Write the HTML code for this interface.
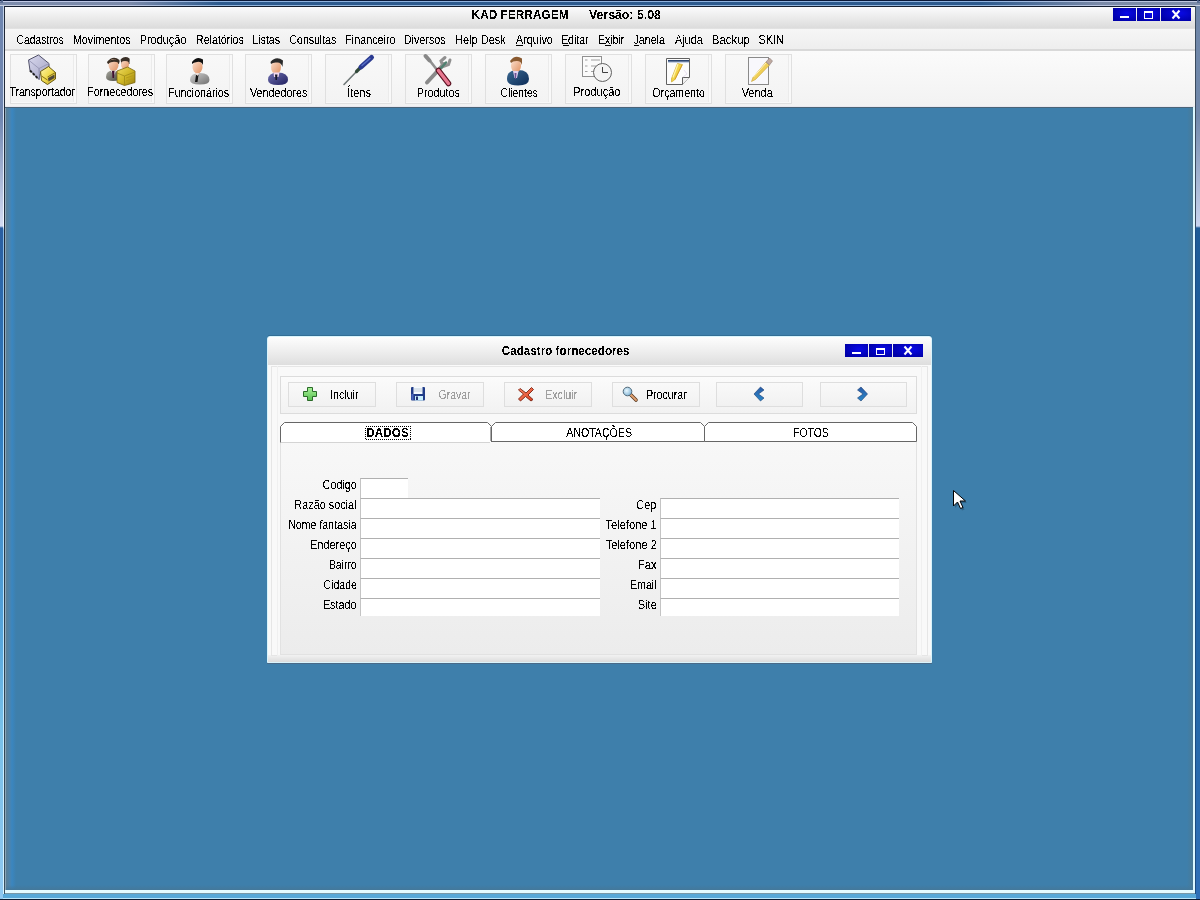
<!DOCTYPE html>
<html><head><meta charset="utf-8"><title>KAD FERRAGEM</title>
<style>
*{margin:0;padding:0;box-sizing:border-box}
html,body{width:1200px;height:900px;overflow:hidden;background:#2a5890;font-family:"Liberation Sans",sans-serif}
.a{position:absolute}
.tbb{position:absolute;top:54px;width:67px;height:50px;border:1px solid #e0e0e0;box-shadow:inset -2px -1px 0 #f9f9f9,inset -3px 0 0 #ebebeb;background:linear-gradient(#f8f8f8,#f3f3f3)}
.dbtn{position:absolute;top:382px;width:88px;height:25px;border:1px solid #dedede;background:linear-gradient(#f9f9f9,#f1f1f1)}
.fld{position:absolute;background:#fff;border-top:1px solid #b0b0b0;border-left:1px solid #c4c4c4}
</style></head><body>
<!-- ===== outer frame ===== -->
<div class="a" style="left:0;top:0;width:1200px;height:1px;background:#0a1838"></div>
<div class="a" style="left:0;top:1px;width:1200px;height:1px;background:linear-gradient(to right,#c4cce8 0,#b8c4e4 130px,#8fb2de 220px,#8fb2de 980px,#b8c4e0 1100px,#c0c8e0 1200px)"></div>
<div class="a" style="left:0;top:2px;width:1200px;height:3px;background:linear-gradient(to right,#7c8cac 0,#7a8aaa 130px,#2c5a8e 220px,#2c5a8e 980px,#7a8aa8 1100px,#7c8ca8 1200px)"></div>
<div class="a" style="left:0;top:5px;width:1200px;height:1px;background:linear-gradient(to right,#c8d0e0 0,#b8c4e0 130px,#90b4dc 220px,#90b4dc 980px,#b8c4e0 1100px,#c8d0e0 1200px)"></div>
<div class="a" style="left:3px;top:6px;width:1193px;height:1px;background:#141e30"></div>
<!-- left frame -->
<div class="a" style="left:0;top:6px;width:3px;height:893px;background:linear-gradient(#6f86b0 0,#6f86b0 110px,#d4dcf2 220px,#2a5ea0 222px,#2f7cc0 420px,#5aa8dc 640px,#78c0e8 720px,#90c8f0 894px)"></div>
<div class="a" style="left:3px;top:6px;width:1px;height:888px;background:linear-gradient(#c0d0e8 0,#f0f8ff 220px,#88b8e0 224px,#a8d8f8 420px,#c8ecff 720px,#d8f4ff 888px)"></div>
<div class="a" style="left:4px;top:6px;width:1px;height:888px;background:linear-gradient(#202838 0,#203040 400px,#385060 888px)"></div>
<!-- right frame -->
<div class="a" style="left:1196px;top:6px;width:4px;height:893px;background:linear-gradient(#6f86a8 0,#7088aa 110px,#c8d4ee 220px,#1e5c98 222px,#2060a0 420px,#2468a8 700px,#3070b8 894px)"></div>
<div class="a" style="left:1195px;top:6px;width:1px;height:888px;background:linear-gradient(#3a4a5c 0,#3a4a5c 220px,#1c4c80 224px,#1c4c80 888px)"></div>
<!-- bottom frame -->
<div class="a" style="left:3px;top:894px;width:1193px;height:4px;background:#58a8d8"></div>
<div class="a" style="left:3px;top:898px;width:1193px;height:1px;background:#b8e4fa"></div>
<div class="a" style="left:0;top:899px;width:1200px;height:1px;background:#0a1a30"></div>

<div class="a" style="left:0;top:0;width:3px;height:3px;background:#5a6e94;border-top-left-radius:3px"></div>
<div class="a" style="left:1197px;top:0;width:3px;height:3px;background:#5a6e94;border-top-right-radius:3px"></div>
<!-- ===== title bar ===== -->
<div class="a" style="left:5px;top:7px;width:1190px;height:22px;background:linear-gradient(#fafbfc 0,#eeeeee 40%,#dcdcdc 95%,#e6e6e6 100%)"></div>
<!-- window buttons -->
<div class="a" style="left:1113px;top:8px;width:23px;height:13px;background:radial-gradient(ellipse at 60% 40%,#0a0ae8,#0000a8 80%)"></div>
<div class="a" style="left:1137px;top:8px;width:23px;height:13px;background:radial-gradient(ellipse at 60% 40%,#0a0ae8,#0000a8 80%)"></div>
<div class="a" style="left:1161px;top:8px;width:30px;height:13px;background:radial-gradient(ellipse at 60% 40%,#0a0ae8,#0000a8 80%)"></div>
<div class="a" style="left:1120px;top:16px;width:9px;height:2px;background:#fff"></div>
<div class="a" style="left:1144px;top:11px;width:9px;height:8px;border:1px solid #fff;border-top-width:2px"></div>

<!-- ===== menubar ===== -->
<div class="a" style="left:5px;top:29px;width:1190px;height:20px;background:linear-gradient(#f6f6f6,#eeeeee)"></div>
<div class="a" style="left:5px;top:49px;width:1190px;height:2px;background:#d9d9d9"></div>
<!-- ===== toolbar ===== -->
<div class="a" style="left:5px;top:51px;width:1190px;height:56px;background:linear-gradient(#fbfbfb,#f2f2f2)"></div>
<div class="a" style="left:5px;top:106px;width:1190px;height:1px;background:#e8e8f0"></div>
<div class="tbb" style="left:10px"></div>
<div class="tbb" style="left:88px"></div>
<div class="tbb" style="left:166px"></div>
<div class="tbb" style="left:245px"></div>
<div class="tbb" style="left:325px"></div>
<div class="tbb" style="left:405px"></div>
<div class="tbb" style="left:485px"></div>
<div class="tbb" style="left:565px"></div>
<div class="tbb" style="left:645px"></div>
<div class="tbb" style="left:725px"></div>

<!-- ===== MDI client ===== -->
<div class="a" style="left:5px;top:107px;width:1188px;height:1px;background:#4a6478"></div>
<div class="a" style="left:5px;top:108px;width:1px;height:782px;background:#8aa6b8"></div>
<div class="a" style="left:6px;top:108px;width:1187px;height:782px;background:#3e7fab"></div>
<div class="a" style="left:6px;top:108px;width:10px;height:782px;background:linear-gradient(to right,#5a7e94 0,#4a84b0 4px,#3a86c0 6px,rgba(62,127,171,0) 10px)"></div>
<div class="a" style="left:1187px;top:108px;width:6px;height:782px;background:linear-gradient(to right,rgba(62,127,171,0),#4a7a96)"></div>
<div class="a" style="left:6px;top:885px;width:1187px;height:5px;background:linear-gradient(rgba(62,127,171,0),#44789a)"></div>
<div class="a" style="left:1193px;top:107px;width:2px;height:786px;background:#dcf8ff"></div>
<div class="a" style="left:5px;top:890px;width:1190px;height:3px;background:#e4faff"></div>
<div class="a" style="left:5px;top:893px;width:1190px;height:1px;background:#7898a8"></div>

<!-- ===== dialog ===== -->
<div class="a" style="left:267px;top:336px;width:665px;height:327px;background:#f9f9f9;border:1px solid #d8f4fc;border-radius:3px 3px 0 0"></div>
<div class="a" style="left:268px;top:337px;width:663px;height:28px;background:linear-gradient(#fdfdfd 0,#f0f0f0 45%,#dedede 100%);border-radius:2px 2px 0 0"></div>
<div class="a" style="left:268px;top:365px;width:663px;height:1px;background:#fafafa"></div>
<div class="a" style="left:268px;top:655px;width:663px;height:7px;background:linear-gradient(#f2f2f2,#dcdcdc)"></div>
<div class="a" style="left:267px;top:663px;width:665px;height:1px;background:#4a6a88"></div>
<div class="a" style="left:268px;top:335px;width:663px;height:1px;background:rgba(30,80,110,0.35);border-radius:2px"></div>
<!-- dialog buttons -->
<div class="a" style="left:845px;top:344px;width:23px;height:13px;background:radial-gradient(ellipse at 60% 40%,#0a0ae8,#0000a8 80%)"></div>
<div class="a" style="left:869px;top:344px;width:23px;height:13px;background:radial-gradient(ellipse at 60% 40%,#0a0ae8,#0000a8 80%)"></div>
<div class="a" style="left:893px;top:344px;width:30px;height:13px;background:radial-gradient(ellipse at 60% 40%,#0a0ae8,#0000a8 80%)"></div>
<div class="a" style="left:852px;top:352px;width:9px;height:2px;background:#fff"></div>
<div class="a" style="left:876px;top:348px;width:9px;height:7px;border:1px solid #fff;border-top-width:2px"></div>
<!-- inner panels -->
<div class="a" style="left:271px;top:366px;width:657px;height:290px;border:1px solid #e6e6e6"></div>
<div class="a" style="left:277px;top:366px;width:645px;height:290px;border:1px solid #f0f0f0;border-top:none"></div>
<!-- toolbar panel -->
<div class="a" style="left:280px;top:376px;width:637px;height:38px;border:1px solid #dcdcdc;background:linear-gradient(#fbfbfb,#f2f2f2)"></div>
<div class="dbtn" style="left:288px"></div>
<div class="dbtn" style="left:396px"></div>
<div class="dbtn" style="left:504px"></div>
<div class="dbtn" style="left:612px"></div>
<div class="dbtn" style="left:716px;width:87px"></div>
<div class="dbtn" style="left:820px;width:87px"></div>
<!-- page control -->
<div class="a" style="left:280px;top:441px;width:637px;height:214px;border-left:1px solid #e2e2e2;border-right:1px solid #e2e2e2;border-bottom:1px solid #e2e2e2;background:linear-gradient(#f8f8f8,#ececec)"></div>

<!-- fields -->
<div class="fld" style="left:360px;top:478px;width:48px;height:20px"></div>
<div class="fld" style="left:360px;top:498px;width:240px;height:20px"></div>
<div class="fld" style="left:360px;top:518px;width:240px;height:20px"></div>
<div class="fld" style="left:360px;top:538px;width:240px;height:20px"></div>
<div class="fld" style="left:360px;top:558px;width:240px;height:20px"></div>
<div class="fld" style="left:360px;top:578px;width:240px;height:20px"></div>
<div class="fld" style="left:360px;top:598px;width:240px;height:18px"></div>
<div class="fld" style="left:660px;top:498px;width:239px;height:20px"></div>
<div class="fld" style="left:660px;top:518px;width:239px;height:20px"></div>
<div class="fld" style="left:660px;top:538px;width:239px;height:20px"></div>
<div class="fld" style="left:660px;top:558px;width:239px;height:20px"></div>
<div class="fld" style="left:660px;top:578px;width:239px;height:20px"></div>
<div class="fld" style="left:660px;top:598px;width:239px;height:18px"></div>

<svg class="a" style="left:0;top:0;will-change:transform" width="1200" height="900" font-family="Liberation Sans, sans-serif">
<!-- tabs -->
<path d="M491.5 441.5 V426.5 L495.5 422.5 H700.5 L704.5 426.5 V441.5 Z" fill="#fff" stroke="#666"/>
<path d="M704.5 441.5 V426.5 L708.5 422.5 H912.5 L916.5 426.5 V441.5 Z" fill="#fff" stroke="#666"/>
<path d="M280.5 442.5 V426.5 L284.5 422.5 H487.5 L491.5 426.5 V442" fill="#fff" stroke="#666"/>
<line x1="490.5" y1="427" x2="490.5" y2="441" stroke="#aaa"/>
<line x1="281" y1="442.5" x2="490" y2="442.5" stroke="#d4d4d4"/>
<rect x="365.5" y="426.5" width="45" height="13" fill="none" stroke="#000" stroke-dasharray="1 1" shape-rendering="crispEdges"/>
<!-- close X main -->
<path d="M1172.5 10.5 L1179.5 18.5 M1179.5 10.5 L1172.5 18.5" stroke="#fff" stroke-width="2"/>
<path d="M904.5 346.5 L911.5 354.5 M911.5 346.5 L904.5 354.5" stroke="#fff" stroke-width="2"/>
<defs><filter id="alias" x="0" y="0" width="1200" height="900" filterUnits="userSpaceOnUse"><feComponentTransfer><feFuncA type="discrete" tableValues="0 0 0 0 0 0 0 0 0 1 1 1 1 1 1 1 1 1 1 1"/></feComponentTransfer></filter></defs>
<defs>
<linearGradient id="gBox" x1="0" y1="0" x2="1" y2="1"><stop offset="0" stop-color="#d8d8ee"/><stop offset="1" stop-color="#a4a4c4"/></linearGradient>
<linearGradient id="gYel" x1="0" y1="0" x2="1" y2="1"><stop offset="0" stop-color="#fff38a"/><stop offset="0.5" stop-color="#e8d020"/><stop offset="1" stop-color="#b09010"/></linearGradient>
<linearGradient id="gSkin" x1="0" y1="0" x2="1" y2="1"><stop offset="0" stop-color="#fbe0d0"/><stop offset="1" stop-color="#e09060"/></linearGradient>
<linearGradient id="gGrey" x1="0" y1="0" x2="1" y2="1"><stop offset="0" stop-color="#d0d0d0"/><stop offset="1" stop-color="#707070"/></linearGradient>
<linearGradient id="gNavy" x1="0" y1="0" x2="1" y2="1"><stop offset="0" stop-color="#7070b0"/><stop offset="1" stop-color="#202060"/></linearGradient>
<linearGradient id="gTeal" x1="0" y1="0" x2="1" y2="1"><stop offset="0" stop-color="#3a6890"/><stop offset="1" stop-color="#0c2c58"/></linearGradient>
<linearGradient id="gGreen" x1="0" y1="0" x2="0" y2="1"><stop offset="0" stop-color="#a8f098"/><stop offset="1" stop-color="#58c050"/></linearGradient>
<linearGradient id="gRed" x1="0" y1="0" x2="1" y2="1"><stop offset="0" stop-color="#ff9070"/><stop offset="1" stop-color="#d83818"/></linearGradient>
<linearGradient id="gChev" x1="0" y1="0" x2="0" y2="1"><stop offset="0" stop-color="#2a5ca8"/><stop offset="1" stop-color="#2a88c8"/></linearGradient>
<radialGradient id="gGlass" cx="0.4" cy="0.4" r="0.6"><stop offset="0" stop-color="#e8f8ff"/><stop offset="1" stop-color="#88b8d8"/></radialGradient>
<linearGradient id="gGold" x1="0" y1="0" x2="1" y2="1"><stop offset="0" stop-color="#f0dc60"/><stop offset="0.5" stop-color="#d0b828"/><stop offset="1" stop-color="#988010"/></linearGradient>
<linearGradient id="gDGrey" x1="0" y1="0" x2="1" y2="1"><stop offset="0" stop-color="#a8a8a0"/><stop offset="1" stop-color="#484840"/></linearGradient>
<linearGradient id="gCab" x1="0" y1="0" x2="1" y2="1"><stop offset="0" stop-color="#fff8b0"/><stop offset="0.5" stop-color="#f0dc50"/><stop offset="1" stop-color="#c0a020"/></linearGradient>
</defs>
<!-- 1 truck -->
<g stroke-linejoin="round">
<path d="M28.5 60 L38.5 55 L49 63.5 L49 70 L40 74 L39 79.5 L30 70.5 Z" fill="url(#gBox)" stroke="#505068" stroke-width="1"/>
<path d="M28.5 60 L39 68.5 L49 63.5" fill="none" stroke="#9090b0" stroke-width="0.8"/>
<path d="M39 68.5 L39.5 79.5" stroke="#8080a0" stroke-width="0.8"/>
<path d="M30 70.5 L38.5 79" stroke="#202020" stroke-width="2" stroke-dasharray="2.5 1.5"/>
<path d="M40.5 71.5 L48.5 66.5 L55.5 72.5 L55.5 79 L47.5 84.5 L41.5 80.5 Z" fill="url(#gCab)" stroke="#6a5a10" stroke-width="1"/>
<path d="M47.5 77 L55.5 72.5" stroke="#6a5a10" stroke-width="0.8"/>
<path d="M48 78 L54.5 74.5 L54.5 78 L48.5 81.5 Z" fill="#504838"/>
<path d="M41.5 76 L47.5 80" stroke="#8a7010" stroke-width="1"/>
</g>
<!-- 2 fornecedores -->
<g>
<path d="M121 59 Q125 55.5 129.5 58.5 L129.5 64 L121 64 Z" fill="#3a3028"/>
<ellipse cx="125" cy="64.5" rx="4" ry="5" fill="url(#gSkin)"/>
<path d="M120.5 59.5 Q125 57 129.5 59.5 L129 62 Q125 60 121 62 Z" fill="#3a3028"/>
<path d="M107 62 Q113 54.5 119.5 60 L119 64 L108 64 Z" fill="#3a2e24"/>
<ellipse cx="113.5" cy="65" rx="5" ry="6" fill="url(#gSkin)"/>
<path d="M107.5 62 Q113.5 57 119.5 61 L119 63 Q113.5 60.5 108 63.5 Z" fill="#3a2e24"/>
<path d="M106 77 Q106 70.5 113 70.5 Q120 70.5 120 77 Q120 81 113 81 Q106 81 106 77 Z" fill="url(#gDGrey)"/>
<path d="M111 71 L116 71 L113.5 76 Z" fill="#f4e8e8"/>
<path d="M112 71 L114.5 71 L114 78 L112.5 78 Z" fill="#401030"/>
<path d="M117 71 L127.5 67 L135 71 L135 82.5 L124.5 85.5 L117 82.5 Z" fill="url(#gGold)" stroke="#7a6410" stroke-width="0.8"/>
<path d="M117 73 L124.5 76 L135 72" fill="none" stroke="#a08a18" stroke-width="0.8"/>
<path d="M124.5 76 L124.5 85.5" stroke="#a08a18" stroke-width="0.8"/>
<path d="M126 78 L133.5 75.5 M126 81 L133.5 78.5" stroke="#b89c18" stroke-width="1"/>
</g>
<!-- 3 funcionarios -->
<g>
<path d="M190 80 Q190 73 200 73 Q209.5 73 209.5 80 Q209.5 84.5 200 84.5 Q190 84.5 190 80 Z" fill="url(#gGrey)"/>
<ellipse cx="197.5" cy="67" rx="5" ry="6.5" fill="url(#gSkin)"/>
<path d="M192 62 Q197 55.5 203 59.5 L203 65 Q201 61 197 62 Q193.5 62.5 192 64 Z" fill="#101010"/>
<path d="M196 75 L198.5 75 L197.5 82 L195 82 Z" fill="#141414"/>
<path d="M195 73 L199 73 L197.5 76 Z" fill="#f0e0d8"/>
</g>
<!-- 4 vendedores -->
<g>
<path d="M268 80 Q268 72.5 278 72.5 Q288 72.5 288 80 Q288 85 278 85 Q268 85 268 80 Z" fill="url(#gNavy)"/>
<ellipse cx="276" cy="67" rx="5" ry="7" fill="url(#gSkin)"/>
<path d="M270.5 62 Q276 55.5 283 60.5 L282.5 67 Q281 62 277 62.5 Q273 62 271 64 Z" fill="#2a2a2a"/>
<path d="M273.5 72.5 L279.5 72.5 L278.5 77 L274 77 Z" fill="#f0d8f0"/>
<path d="M275 74.5 L277.5 74.5 L277 80 L275.5 80 Z" fill="#181828"/>
</g>
<!-- 5 itens screwdriver -->
<g stroke-linecap="round">
<path d="M344 84.5 L358 70" stroke="#707878" stroke-width="1.6"/>
<path d="M356.5 71.5 L360.5 67.5" stroke="#304838" stroke-width="3.2"/>
<path d="M361 67 L371.5 57.5" stroke="#2a3a90" stroke-width="5"/>
<path d="M362 65.5 L370 58.5" stroke="#5870c8" stroke-width="1.4"/>
</g>
<!-- 6 produtos -->
<g stroke-linecap="round">
<path d="M427 57 L448 84" stroke="#909090" stroke-width="2.6"/>
<path d="M425.5 56 L429.5 60.5" stroke="#888" stroke-width="4"/>
<path d="M427 82.5 L444 64" stroke="#8a8a8a" stroke-width="4"/>
<path d="M445 57.5 L441 61 L443 66.5 L448.5 64.5 L450 60" fill="none" stroke="#909090" stroke-width="3"/>
<path d="M441 68 L446 62.5" stroke="#508070" stroke-width="2.5"/>
<path d="M438.5 70.5 L448.5 83.5" stroke="#5a1020" stroke-width="5.5"/>
<path d="M438.5 70.5 L448.5 83.5" stroke="#e87890" stroke-width="3.4"/>
</g>
<!-- 7 clientes -->
<g>
<path d="M507 79 Q507 70 518 70 Q529 70 529 79 Q529 85.5 518 85.5 Q507 85.5 507 79 Z" fill="url(#gTeal)"/>
<ellipse cx="516" cy="66" rx="5" ry="6.5" fill="url(#gSkin)"/>
<path d="M510 61 Q515 54 522 58.5 L522 65 Q520.5 60.5 516.5 61 Q512.5 61 511 63 Z" fill="#8a5a30"/>
<path d="M513 71 L518.5 71 L517 78 L514.5 78 Z" fill="#e0d0f0"/>
<path d="M514.5 73 L516.5 73 L516 79 L515 79 Z" fill="#6a5090"/>
</g>
<!-- 8 producao -->
<g>
<rect x="582.5" y="56.5" width="19" height="20" fill="#fbfbfb" stroke="#909090"/>
<path d="M585 60 L587.5 60 M591 60 L600 60 M585 66 L587.5 66 M591 66 L596 66 M585 71.5 L587.5 71.5 M591 71.5 L595 71.5" stroke="#a0a0a0" stroke-width="1.2"/>
<circle cx="602.5" cy="72.5" r="9" fill="#f4f4f4" stroke="#606060" stroke-width="1"/>
<path d="M602.5 72.5 V67 M602.5 72.5 H608" stroke="#404040" stroke-width="1"/>
</g>
<!-- 9 orcamento -->
<g>
<path d="M666.5 58.5 H689.5 V77 L682.5 84.5 H666.5 Z" fill="#fcfcfc" stroke="#606060" stroke-width="1"/>
<rect x="668" y="60" width="21" height="1.8" fill="#2a4470"/>
<rect x="668" y="61.8" width="21" height="1" fill="#b8c8e0"/>
<path d="M682.5 84.5 V77.5 H689.5" fill="#f0f0f0" stroke="#606060" stroke-width="1"/>
<path d="M677.5 63.5 L682.5 64.5 L674.5 80 L671.5 82 L671.5 78.5 Z" fill="#f2d448" stroke="#c8a020" stroke-width="0.6" stroke-linejoin="round"/>
<path d="M678 64 L673 77.5" stroke="#fff4b0" stroke-width="1.2"/>
<path d="M682 65 L675 79.5" stroke="#d09828" stroke-width="0.9"/>
<path d="M684 70 L687 74 L683 77" fill="none" stroke="#e8e0f0" stroke-width="1"/>
</g>
<!-- 10 venda -->
<g>
<rect x="748.5" y="57.5" width="20" height="27" fill="#f8f8fc" stroke="#8a8a8a" stroke-width="1"/>
<path d="M766 62 L769.5 65 L755.5 79.5 L751.5 81.5 L753 77.5 Z" fill="#efcf58" stroke="#c8a030" stroke-width="0.6" stroke-linejoin="round"/>
<path d="M766.5 62.5 L753.5 77" stroke="#fff4c0" stroke-width="1"/>
<path d="M766 62 L769.5 58 L772.5 61 L769.5 65 Z" fill="#c0aaa0" stroke="#8a7a78" stroke-width="0.6"/>
</g>
<!-- dialog icons -->
<path d="M307.5 387.5 H312.5 V391.5 H316.5 V396.5 H312.5 V400.5 H307.5 V396.5 H303.5 V391.5 H307.5 Z" fill="url(#gGreen)" stroke="#2a6a28" stroke-width="1"/>
<g>
<rect x="411" y="387" width="14" height="13.5" rx="1" fill="#203c88"/>
<rect x="413.5" y="387" width="9" height="7" fill="#f4faff"/>
<path d="M414 389 H422 M414 391 H422" stroke="#a0b0c0" stroke-width="0.6"/>
<rect x="415" y="396" width="8" height="4.5" fill="#c8f0ff"/>
<rect x="416" y="396.5" width="2" height="3.5" fill="#203070"/>
<rect x="411.5" y="394" width="2" height="6" fill="#4a68c0"/>
</g>
<path d="M520 388.5 L526 393 L531.5 387.5 L533.5 389.5 L528 395 L533 399.5 L531 401 L525.5 396.5 L520.5 401 L518.5 399 L523.5 394 L518.5 390 Z" fill="url(#gRed)" stroke="#7a2010" stroke-width="0.9" stroke-linejoin="round"/>
<g>
<path d="M630.5 394.5 L636 400" stroke="#5a3a20" stroke-width="3.6" stroke-linecap="round"/>
<path d="M630.5 394.5 L636 400" stroke="#e0a070" stroke-width="2" stroke-linecap="round"/>
<circle cx="627.5" cy="391.5" r="4.3" fill="url(#gGlass)" stroke="#506878" stroke-width="1"/>
</g>
<path d="M760.5 387 L764 390 L758.5 394 L764 398 L760.5 401 L754 394 Z" fill="url(#gChev)" stroke="#1a3a70" stroke-width="0.6" stroke-linejoin="round"/>
<path d="M861 387 L857.5 390 L863 394 L857.5 398 L861 401 L867.5 394 Z" fill="url(#gChev)" stroke="#1a3a70" stroke-width="0.6" stroke-linejoin="round"/>

<!-- underlines -->
<rect x="516" y="45" width="7" height="1" fill="#000"/>
<rect x="563" y="45" width="6" height="1" fill="#000"/>
<rect x="605" y="45" width="6" height="1" fill="#000"/>
<rect x="634" y="45" width="5" height="1" fill="#000"/>
<g filter="url(#alias)">
<text x="471.59" y="19" font-size="12.5" font-weight="bold" fill="#000" textLength="97.00" lengthAdjust="spacingAndGlyphs">KAD FERRAGEM</text>
<text x="588.95" y="19" font-size="12.5" font-weight="bold" fill="#000" textLength="71.96" lengthAdjust="spacingAndGlyphs">Versão: 5.08</text>
<text x="16.42" y="44" font-size="12" font-weight="normal" fill="#000" textLength="47.21" lengthAdjust="spacingAndGlyphs">Cadastros</text>
<text x="72.96" y="44" font-size="12" font-weight="normal" fill="#000" textLength="57.68" lengthAdjust="spacingAndGlyphs">Movimentos</text>
<text x="139.64" y="44" font-size="12" font-weight="normal" fill="#000" textLength="46.85" lengthAdjust="spacingAndGlyphs">Produção</text>
<text x="195.97" y="44" font-size="12" font-weight="normal" fill="#000" textLength="47.75" lengthAdjust="spacingAndGlyphs">Relatórios</text>
<text x="252.31" y="44" font-size="12" font-weight="normal" fill="#000" textLength="27.79" lengthAdjust="spacingAndGlyphs">Listas</text>
<text x="289.56" y="44" font-size="12" font-weight="normal" fill="#000" textLength="46.65" lengthAdjust="spacingAndGlyphs">Consultas</text>
<text x="345.15" y="44" font-size="12" font-weight="normal" fill="#000" textLength="50.37" lengthAdjust="spacingAndGlyphs">Financeiro</text>
<text x="403.80" y="44" font-size="12" font-weight="normal" fill="#000" textLength="41.88" lengthAdjust="spacingAndGlyphs">Diversos</text>
<text x="455.19" y="44" font-size="12" font-weight="normal" fill="#000" textLength="50.51" lengthAdjust="spacingAndGlyphs">Help Desk</text>
<text x="515.85" y="44" font-size="12" font-weight="normal" fill="#000" textLength="37.10" lengthAdjust="spacingAndGlyphs">Arquivo</text>
<text x="561.13" y="44" font-size="12" font-weight="normal" fill="#000" textLength="27.36" lengthAdjust="spacingAndGlyphs">Editar</text>
<text x="597.92" y="44" font-size="12" font-weight="normal" fill="#000" textLength="26.30" lengthAdjust="spacingAndGlyphs">Exibir</text>
<text x="633.38" y="44" font-size="12" font-weight="normal" fill="#000" textLength="31.60" lengthAdjust="spacingAndGlyphs">Janela</text>
<text x="674.90" y="44" font-size="12" font-weight="normal" fill="#000" textLength="27.95" lengthAdjust="spacingAndGlyphs">Ajuda</text>
<text x="711.80" y="44" font-size="12" font-weight="normal" fill="#000" textLength="38.15" lengthAdjust="spacingAndGlyphs">Backup</text>
<text x="758.39" y="44" font-size="12" font-weight="normal" fill="#000" textLength="25.68" lengthAdjust="spacingAndGlyphs">SKIN</text>
<text x="9.48" y="96" font-size="12" font-weight="normal" fill="#000" textLength="65.37" lengthAdjust="spacingAndGlyphs">Transportador</text>
<text x="87.31" y="96" font-size="12" font-weight="normal" fill="#000" textLength="65.85" lengthAdjust="spacingAndGlyphs">Fornecedores</text>
<text x="168.16" y="97" font-size="12" font-weight="normal" fill="#000" textLength="60.89" lengthAdjust="spacingAndGlyphs">Funcionários</text>
<text x="250.00" y="97" font-size="12" font-weight="normal" fill="#000" textLength="57.27" lengthAdjust="spacingAndGlyphs">Vendedores</text>
<text x="347.12" y="97" font-size="12" font-weight="normal" fill="#000" textLength="23.76" lengthAdjust="spacingAndGlyphs">Ítens</text>
<text x="416.70" y="97" font-size="12" font-weight="normal" fill="#000" textLength="43.17" lengthAdjust="spacingAndGlyphs">Produtos</text>
<text x="500.62" y="97" font-size="12" font-weight="normal" fill="#000" textLength="37.13" lengthAdjust="spacingAndGlyphs">Clientes</text>
<text x="573.23" y="96" font-size="12" font-weight="normal" fill="#000" textLength="47.26" lengthAdjust="spacingAndGlyphs">Produção</text>
<text x="652.36" y="97" font-size="12" font-weight="normal" fill="#000" textLength="52.46" lengthAdjust="spacingAndGlyphs">Orçamento</text>
<text x="741.65" y="97" font-size="12" font-weight="normal" fill="#000" textLength="31.13" lengthAdjust="spacingAndGlyphs">Venda</text>
<text x="501.76" y="355" font-size="12" font-weight="bold" fill="#000" textLength="127.85" lengthAdjust="spacingAndGlyphs">Cadastro fornecedores</text>
<text x="330.11" y="399" font-size="12" font-weight="normal" fill="#000" textLength="28.42" lengthAdjust="spacingAndGlyphs">Incluir</text>
<text x="438.62" y="399" font-size="12" font-weight="normal" fill="#a0a0a0" textLength="31.78" lengthAdjust="spacingAndGlyphs">Gravar</text>
<text x="545.16" y="399" font-size="12" font-weight="normal" fill="#a0a0a0" textLength="31.91" lengthAdjust="spacingAndGlyphs">Excluir</text>
<text x="645.91" y="399" font-size="12" font-weight="normal" fill="#000" textLength="40.92" lengthAdjust="spacingAndGlyphs">Procurar</text>
<text x="366.37" y="437" font-size="12" font-weight="bold" fill="#000" textLength="42.46" lengthAdjust="spacingAndGlyphs">DADOS</text>
<text x="566.20" y="437" font-size="12" font-weight="normal" fill="#000" textLength="65.80" lengthAdjust="spacingAndGlyphs">ANOTAÇÕES</text>
<text x="793.13" y="437" font-size="12" font-weight="normal" fill="#000" textLength="35.58" lengthAdjust="spacingAndGlyphs">FOTOS</text>
<text x="322.60" y="489" font-size="12" font-weight="normal" fill="#000" textLength="34.22" lengthAdjust="spacingAndGlyphs">Codigo</text>
<text x="294.35" y="509" font-size="12" font-weight="normal" fill="#000" textLength="62.14" lengthAdjust="spacingAndGlyphs">Razão social</text>
<text x="288.17" y="529" font-size="12" font-weight="normal" fill="#000" textLength="68.37" lengthAdjust="spacingAndGlyphs">Nome fantasia</text>
<text x="310.04" y="549" font-size="12" font-weight="normal" fill="#000" textLength="46.75" lengthAdjust="spacingAndGlyphs">Endereço</text>
<text x="328.88" y="569" font-size="12" font-weight="normal" fill="#000" textLength="27.71" lengthAdjust="spacingAndGlyphs">Bairro</text>
<text x="323.56" y="589" font-size="12" font-weight="normal" fill="#000" textLength="33.30" lengthAdjust="spacingAndGlyphs">Cidade</text>
<text x="322.90" y="609" font-size="12" font-weight="normal" fill="#000" textLength="33.62" lengthAdjust="spacingAndGlyphs">Estado</text>
<text x="636.24" y="509" font-size="12" font-weight="normal" fill="#000" textLength="20.13" lengthAdjust="spacingAndGlyphs">Cep</text>
<text x="605.57" y="529" font-size="12" font-weight="normal" fill="#000" textLength="51.21" lengthAdjust="spacingAndGlyphs">Telefone 1</text>
<text x="605.67" y="549" font-size="12" font-weight="normal" fill="#000" textLength="51.21" lengthAdjust="spacingAndGlyphs">Telefone 2</text>
<text x="637.92" y="569" font-size="12" font-weight="normal" fill="#000" textLength="18.56" lengthAdjust="spacingAndGlyphs">Fax</text>
<text x="630.02" y="589" font-size="12" font-weight="normal" fill="#000" textLength="26.55" lengthAdjust="spacingAndGlyphs">Email</text>
<text x="637.74" y="609" font-size="12" font-weight="normal" fill="#000" textLength="19.16" lengthAdjust="spacingAndGlyphs">Site</text>
</g>
<!-- cursor -->
<path d="M955 492 V508 L959 504 L962 510.5 L964.5 509.5 L961.5 503 H967 Z" fill="rgba(0,20,40,0.25)"/>
<path d="M953.5 490.5 V506 L957.5 502 L960.5 508.5 L963 507.5 L960 501 H965.5 Z" fill="#fff" stroke="#000" stroke-linejoin="miter"/>
</svg>
</body></html>
